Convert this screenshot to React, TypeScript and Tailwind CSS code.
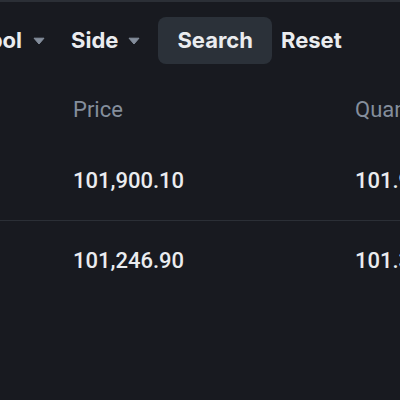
import React from 'react';

function Caret() {
  return (
    <svg width="12" height="8" viewBox="0 0 12 8" className="shrink-0">
      <path d="M1 1.2h10L6 7z" fill="#848e9c" stroke="#848e9c" strokeWidth="1" strokeLinejoin="round" />
    </svg>
  );
}

const rows = [
  { price: '101,900.10', qty: '101.9' },
  { price: '101,246.90', qty: '101.3' },
];

export default function App() {
  return (
    <div className="w-[400px] h-[400px] overflow-hidden bg-[#181a20] border-t-2 border-[#2b2f36]">
      {/* Filters */}
      <div
        className="flex items-center h-[77px] -ml-[59px] whitespace-nowrap text-[22px] font-bold text-[#eaecef]"
        style={{ fontFamily: 'Inter, "Noto Sans", sans-serif' }}
      >
        <div className="flex items-center gap-[11px]">
          <span>Symbol</span>
          <Caret />
        </div>
        <div className="flex items-center gap-[10px] ml-[26px]">
          <span>Side</span>
          <Caret />
        </div>
        <button className="ml-[18px] h-[47px] px-[19px] rounded-lg bg-[#2b3139] text-[#eaecef]">Search</button>
        <button className="ml-[9px] text-[#eaecef]">Reset</button>
      </div>

      {/* Table */}
      <div className="text-[22px] whitespace-nowrap" style={{ fontFamily: 'Roboto, "Liberation Sans", sans-serif' }}>
        <div className="flex items-center h-[61px] text-[#848e9c]">
          <div className="w-[73px] shrink-0" />
          <div className="w-[282px] shrink-0">Price</div>
          <div>Quantity</div>
        </div>
        {rows.map((r, i) => (
          <div
            key={r.price}
            className={`flex items-center font-medium text-[#eaecef] ${i === 0 ? 'h-[81px] border-b-[1.5px] border-[#2b2f36]' : 'h-[79px]'}`}
          >
            <div className="w-[73px] shrink-0" />
            <div className="w-[282px] shrink-0">{r.price}</div>
            <div>{r.qty}</div>
          </div>
        ))}
      </div>
    </div>
  );
}
